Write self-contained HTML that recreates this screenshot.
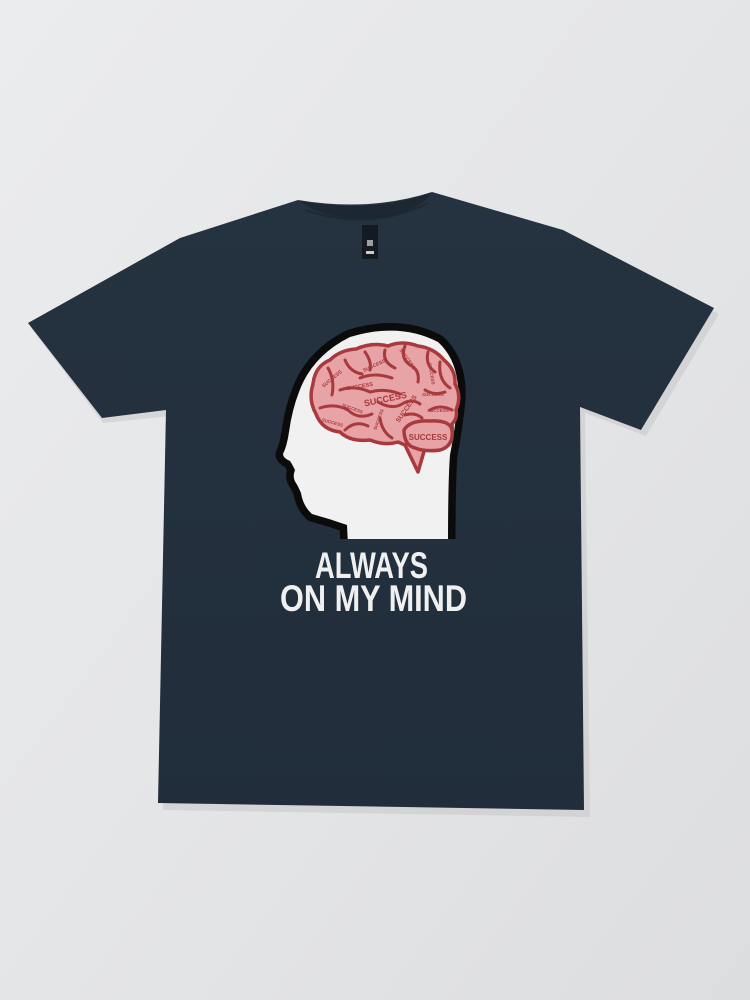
<!DOCTYPE html>
<html><head><style>
html,body{margin:0;padding:0;width:750px;height:1000px;overflow:hidden;background:#e4e5e7}
</style></head><body>
<svg width="750" height="1000" viewBox="0 0 750 1000" xmlns="http://www.w3.org/2000/svg">
<defs>
<linearGradient id="bg" x1="0" y1="0" x2="1" y2="1">
<stop offset="0" stop-color="#ebecee"/><stop offset="0.6" stop-color="#e3e4e6"/><stop offset="1" stop-color="#dcdddf"/>
</linearGradient>
<linearGradient id="sh" x1="0" y1="0" x2="0" y2="1">
<stop offset="0" stop-color="#25323f"/><stop offset="1" stop-color="#212d3b"/>
</linearGradient>
<clipPath id="neck"><rect x="0" y="0" width="750" height="539"/></clipPath>
</defs>
<rect width="750" height="1000" fill="url(#bg)"/>
<path d="M300,201 Q370,212 432,193 L563,230 L716,310 L643,432 L582,409 L587,813 L160,806 L167,412 L100,419 L28,324 L180,238 Z" fill="#c9cacc" transform="translate(3,4)" opacity="0.6"/>
<path d="M298,200 Q370,212 432,192 L563,230 L714,308 L641,430 L580,407 L584,810 L158,803 L166,410 L102,418 L28,323 L180,238 Z" fill="url(#sh)"/>
<path d="M300,201 Q370,214 431,193 Q420,212 370,220 Q320,218 300,201 Z" fill="#1c2733"/>
<path d="M305,210 Q370,232 428,203" fill="none" stroke="#1d2935" stroke-width="2"/>
<rect x="362" y="225" width="16" height="34" fill="#141a20"/>
<rect x="367" y="240" width="6" height="6" fill="#9aa0a6"/>
<rect x="366" y="251" width="8" height="3" fill="#c8ccd0"/>
<g clip-path="url(#neck)">
<path d="M348,545 L347,525 Q330,519 312,514 Q303,506 301,493 Q298,486 296,483 Q292,477 295,470 Q292,464 290,461 Q283,458 283,454 Q287,446 289,432 Q292,410 299,392 Q312,356 350,337 Q400,322 438,342 Q460,362 458,400 Q455,430 450,455 Q448,480 448,545 Z" fill="#f1f1f1" stroke="#0b0b0b" stroke-width="15" stroke-linejoin="round" paint-order="stroke"/>
</g>
<g stroke="#a83a3e" stroke-width="3.5" fill="#e7a3a6" stroke-linejoin="round" stroke-linecap="round">
<path d="M418,472 L405,445 L398,442 Q385,446 370,440 Q350,442 340,432 Q322,430 316,414 Q308,400 313,384 Q315,366 330,360 Q340,350 356,349 Q372,342 388,346 Q402,340 418,346 Q434,348 444,360 Q456,370 455,384 Q462,396 456,410 Q458,418 452,424 Q454,446 440,450 Q428,452 425,448 Z"/>
<path d="M404,430 Q410,420 430,421 Q450,420 452,430 Q454,446 440,450 Q425,452 415,448 Q404,445 404,430 Z"/>
<g fill="none" stroke-width="3">
<path d="M328,368 Q335,380 332,395"/><path d="M345,360 Q350,372 362,374"/>
<path d="M365,352 Q372,362 370,370"/><path d="M385,350 Q382,362 395,368"/>
<path d="M405,346 Q400,358 410,365 Q420,370 418,382"/><path d="M428,352 Q425,365 435,372"/>
<path d="M440,362 Q438,380 450,388"/><path d="M340,390 Q355,385 370,392 Q385,388 400,394"/>
<path d="M360,378 Q375,372 392,378"/><path d="M320,408 Q335,403 348,410 Q358,420 372,414"/>
<path d="M378,402 Q392,410 402,404 Q412,398 420,404"/><path d="M425,390 Q435,396 445,392"/>
<path d="M430,410 Q440,404 452,410"/><path d="M345,430 Q355,420 368,426"/>
<path d="M380,418 Q382,432 392,438"/><path d="M405,415 Q415,412 422,418"/>
</g>
</g>
<g font-family="Liberation Sans, sans-serif" font-weight="bold" fill="#a83a3e">
<text x="386" y="402" font-size="9" transform="rotate(-12 386 402)" text-anchor="middle">SUCCESS</text>
<text x="428" y="440" font-size="8" text-anchor="middle">SUCCESS</text>
<text x="360" y="388" font-size="5.5" transform="rotate(-10 360 388)" text-anchor="middle">SUCCESS</text>
<text x="333" y="380" font-size="5" transform="rotate(-40 333 380)" text-anchor="middle">SUCCESS</text>
<text x="375" y="367" font-size="5" transform="rotate(-25 375 367)" text-anchor="middle">SUCCESS</text>
<text x="406" y="360" font-size="5" transform="rotate(55 406 360)" text-anchor="middle">SUCCESS</text>
<text x="430" y="374" font-size="4.5" transform="rotate(80 430 374)" text-anchor="middle">SUCCESS</text>
<text x="433" y="396" font-size="4.5" text-anchor="middle">SUCCESS</text>
<text x="438" y="412" font-size="4.5" text-anchor="middle">SUCCESS</text>
<text x="408" y="410" font-size="6.5" transform="rotate(-55 408 410)" text-anchor="middle">SUCCESS</text>
<text x="352" y="410" font-size="4.5" transform="rotate(20 352 410)" text-anchor="middle">SUCCESS</text>
<text x="380" y="420" font-size="4.5" transform="rotate(-70 380 420)" text-anchor="middle">SUCCESS</text>
<text x="332" y="424" font-size="4.5" transform="rotate(15 332 424)" text-anchor="middle">SUCCESS</text>
</g>
<g font-family="Liberation Sans, sans-serif" font-weight="bold" fill="#f0f0f0" font-size="37">
<text x="315" y="578" textLength="113" lengthAdjust="spacingAndGlyphs">ALWAYS</text>
<text x="280" y="611" textLength="187" lengthAdjust="spacingAndGlyphs">ON MY MIND</text>
</g>
</svg>
</body></html>
